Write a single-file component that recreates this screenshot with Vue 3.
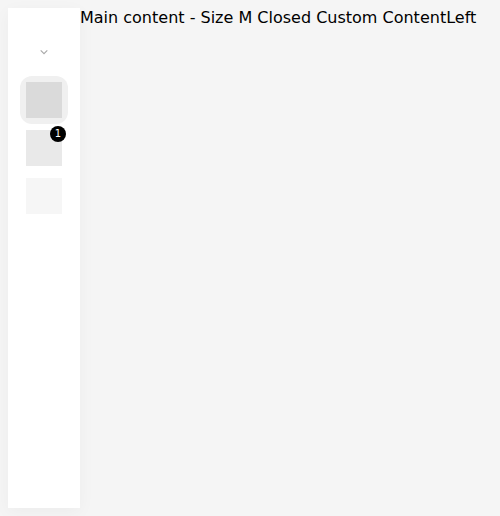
<script setup>
import { ref } from 'vue'

const selected = ref(0)
const items = [
  { label: 'First item', tone: 'dark', count: 0 },
  { label: 'Second item', tone: 'medium', count: 1 },
  { label: 'Third item', tone: 'light', count: 0 },
]
</script>

<template>
  <div class="layout">
    <nav class="sidebar" aria-label="Sidebar">
      <button class="toggle" type="button" aria-label="Open menu">
        <svg width="8" height="8" viewBox="0 0 8 8" aria-hidden="true">
          <path d="M0.7 2.4 L4 5.7 L7.3 2.4" fill="none" stroke="#a8a8a8" stroke-width="1.1" />
        </svg>
      </button>
      <button
        v-for="(item, index) in items"
        :key="item.label"
        class="item"
        :class="{ selected: selected === index }"
        type="button"
        :aria-label="item.label"
        @click="selected = index"
      >
        <span class="thumb" :class="item.tone"></span>
        <span v-if="item.count" class="badge">{{ item.count }}</span>
      </button>
    </nav>
    <main class="content">Main content - Size M Closed Custom ContentLeft</main>
  </div>
</template>

<style>
body {
  margin: 0;
  background: #f5f5f5;
}
</style>

<style scoped>
.layout {
  display: flex;
  box-sizing: border-box;
  min-height: 100vh;
  padding: 8px;
  font-family: "DejaVu Sans", sans-serif;
  font-size: 16px;
  line-height: 19px;
  color: #000;
}

.sidebar {
  display: flex;
  flex: none;
  flex-direction: column;
  padding: 20px 12px;
  background: #fff;
  box-shadow: 0 4px 16px rgba(0, 0, 0, 0.04);
}

.toggle,
.item {
  position: relative;
  display: flex;
  align-items: center;
  justify-content: center;
  width: 48px;
  height: 48px;
  padding: 0;
  border: 0;
  border-radius: 12px;
  background: transparent;
  font: inherit;
  cursor: pointer;
}

.item.selected {
  background: #f0f0f0;
}

.thumb {
  width: 36px;
  height: 36px;
}

.dark {
  background: #dadada;
}

.medium {
  background: #e9e9e9;
}

.light {
  background: #f6f6f6;
}

.badge {
  position: absolute;
  top: 2px;
  right: 2px;
  width: 16px;
  height: 16px;
  border-radius: 50%;
  background: #000;
  color: #fff;
  font-size: 10px;
  line-height: 16px;
  text-align: center;
}

.content {
  flex: 1;
  min-width: 0;
}
</style>
